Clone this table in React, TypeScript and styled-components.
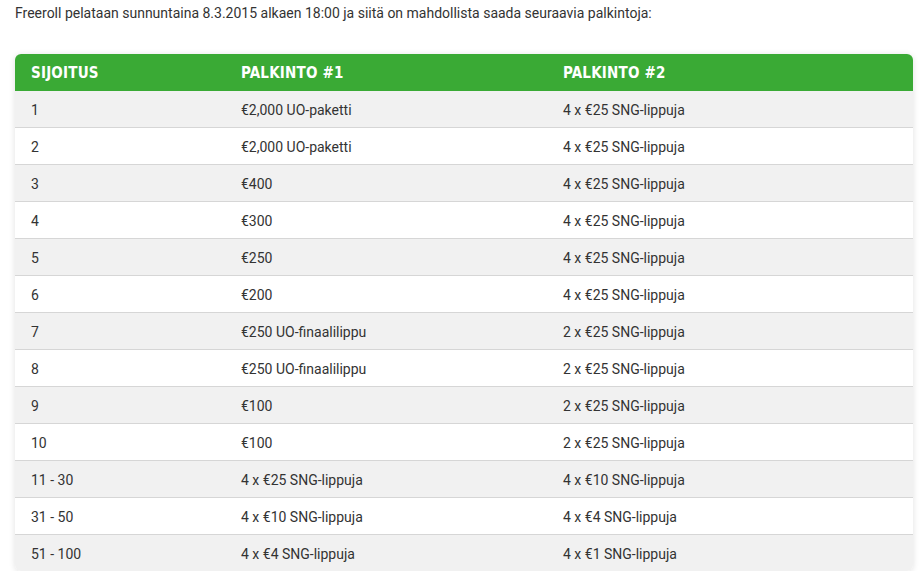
import React from 'react';
import styled, { createGlobalStyle } from 'styled-components';

const GlobalStyle = createGlobalStyle`
  body {
    margin: 0;
    background: #fff;
    font-family: Roboto, "Liberation Sans", sans-serif;
    color: #333;
  }
`;

const Page = styled.div`
  padding: 4px 10px 0 15px;
`;

const Intro = styled.p`
  margin: 0 0 32px;
  font-size: 14px;
  line-height: 18px;
  color: #333;
`;

const Table = styled.table`
  width: 898px;
  border-collapse: separate;
  border-spacing: 0;
  border-radius: 6px;
  overflow: hidden;
  box-shadow: 0 1px 6px rgba(0, 0, 0, 0.12);
  font-size: 14px;
`;

const HeadCell = styled.th<{ $w: number }>`
  width: ${(p) => p.$w}px;
  background: #3aaa35;
  color: #fff;
  text-align: left;
  padding: 0 16px;
  height: 37px;
  font-family: "DejaVu Sans Condensed", "DejaVu Sans", sans-serif;
  font-weight: bold;
  font-stretch: condensed;
  font-size: 15px;
  letter-spacing: 0.2px;
`;

const Row = styled.tr<{ $odd: boolean }>`
  background: ${(p) => (p.$odd ? '#f1f1f1' : '#fff')};
`;

const Cell = styled.td<{ $last: boolean }>`
  box-sizing: border-box;
  height: ${(p) => (p.$last ? '36px' : '37px')};
  padding: 2px 16px 0;
  color: #333;
  border-bottom: ${(p) => (p.$last ? 'none' : '1px solid #d6d6d6')};
`;

const rows: [string, string, string][] = [
  ['1', '€2,000 UO-paketti', '4 x €25 SNG-lippuja'],
  ['2', '€2,000 UO-paketti', '4 x €25 SNG-lippuja'],
  ['3', '€400', '4 x €25 SNG-lippuja'],
  ['4', '€300', '4 x €25 SNG-lippuja'],
  ['5', '€250', '4 x €25 SNG-lippuja'],
  ['6', '€200', '4 x €25 SNG-lippuja'],
  ['7', '€250 UO-finaalilippu', '2 x €25 SNG-lippuja'],
  ['8', '€250 UO-finaalilippu', '2 x €25 SNG-lippuja'],
  ['9', '€100', '2 x €25 SNG-lippuja'],
  ['10', '€100', '2 x €25 SNG-lippuja'],
  ['11 - 30', '4 x €25 SNG-lippuja', '4 x €10 SNG-lippuja'],
  ['31 - 50', '4 x €10 SNG-lippuja', '4 x €4 SNG-lippuja'],
  ['51 - 100', '4 x €4 SNG-lippuja', '4 x €1 SNG-lippuja'],
];

const App = () => {
  return (
    <Page>
      <GlobalStyle />
      <Intro>
        Freeroll pelataan sunnuntaina 8.3.2015 alkaen 18:00 ja siitä on mahdollista saada seuraavia palkintoja:
      </Intro>
      <Table>
        <thead>
          <tr>
            <HeadCell $w={178}>SIJOITUS</HeadCell>
            <HeadCell $w={290}>PALKINTO #1</HeadCell>
            <HeadCell $w={334}>PALKINTO #2</HeadCell>
          </tr>
        </thead>
        <tbody>
          {rows.map((r, i) => (
            <Row key={i} $odd={i % 2 === 0}>
              {r.map((c, j) => (
                <Cell key={j} $last={i === rows.length - 1}>
                  {c}
                </Cell>
              ))}
            </Row>
          ))}
        </tbody>
      </Table>
    </Page>
  );
};

export default App;
